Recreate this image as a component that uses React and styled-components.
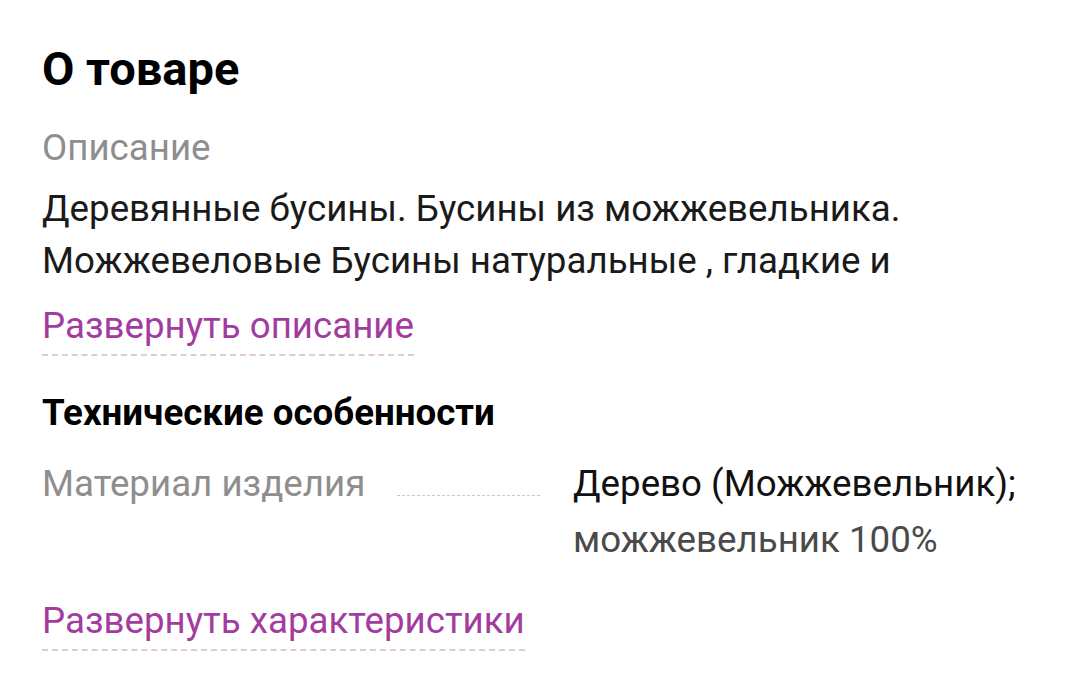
import styled, { createGlobalStyle } from "styled-components";

const GlobalStyle = createGlobalStyle`
  body {
    margin: 0;
    background: #fff;
    font-family: Roboto, "Liberation Sans", sans-serif;
  }
`;

const Section = styled.section`
  padding: 41px 42px 0 42px;
  width: 1080px;
  box-sizing: border-box;
`;

const Title = styled.h2`
  margin: 0;
  font-size: 47px;
  line-height: 56px;
  font-weight: 700;
  color: #000;
`;

const Label = styled.div`
  margin-top: 29px;
  font-size: 36.7px;
  line-height: 44px;
  color: #8e8e8e;
`;

const Description = styled.div`
  margin-top: 13px;
  font-size: 36.7px;
  line-height: 52px;
  color: #1a1a1a;
  max-height: 104px;
  overflow: hidden;
`;

const ExpandLink = styled.a`
  display: block;
  width: fit-content;
  margin-top: ${({ $top }) => $top}px;
  font-size: 36.7px;
  line-height: 44px;
  color: #a23d9f;
  text-decoration: none;
  padding-bottom: 6px;
  border-bottom: 2px dashed #e0c8df;
  cursor: pointer;
`;

const Subtitle = styled.h3`
  margin: 35px 0 0;
  font-size: 36.7px;
  line-height: 44px;
  font-weight: 700;
  color: #000;
`;

const SpecRow = styled.div`
  display: flex;
  margin-top: 21px;
`;

const SpecName = styled.div`
  width: 498px;
  display: flex;
  align-items: baseline;
  font-size: 36.7px;
  line-height: 56px;
  color: #8e8e8e;
`;

const Dots = styled.span`
  flex: 1;
  margin-left: 32px;
  border-bottom: 1px dashed #c8c8c8;
`;

const SpecValue = styled.div`
  flex: 1;
  padding-left: 33px;
  font-size: 36.7px;
  line-height: 56px;
  color: #111;
`;

const SubValue = styled.div`
  color: #4a4a4a;
`;

export default function App() {
  return (
    <>
      <GlobalStyle />
      <Section>
        <Title>О товаре</Title>
        <Label>Описание</Label>
        <Description>
          Деревянные бусины. Бусины из можжевельника. Можжевеловые Бусины
          натуральные , гладкие и приятные на ощупь, обладают тонким
          ароматом можжевельника.
        </Description>
        <ExpandLink $top={17}>Развернуть описание</ExpandLink>
        <Subtitle>Технические особенности</Subtitle>
        <SpecRow>
          <SpecName>
            Материал изделия
            <Dots />
          </SpecName>
          <SpecValue>
            Дерево (Можжевельник);
            <SubValue>можжевельник 100%</SubValue>
          </SpecValue>
        </SpecRow>
        <ExpandLink $top={31}>Развернуть характеристики</ExpandLink>
      </Section>
    </>
  );
}
